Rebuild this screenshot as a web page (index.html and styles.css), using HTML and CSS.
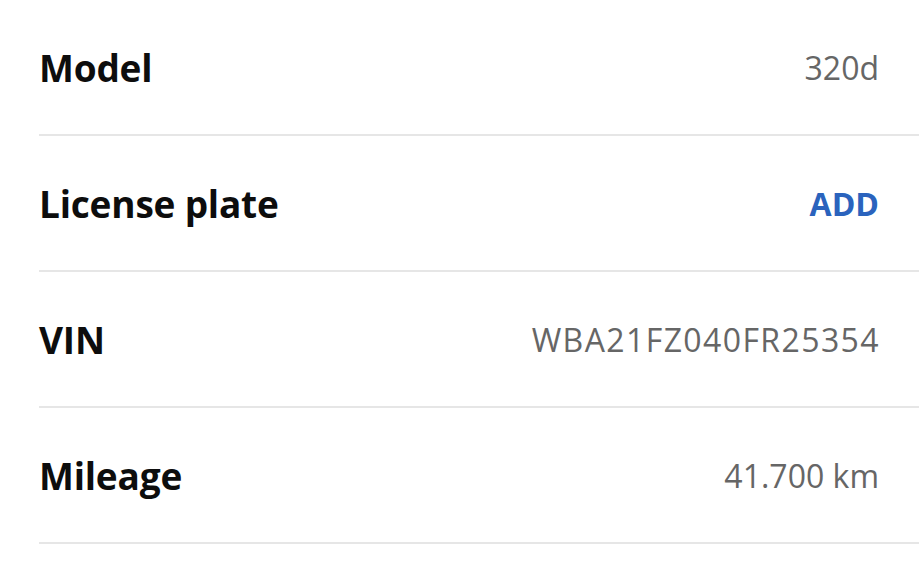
FILE: index.html
```html
<!DOCTYPE html>
<html lang="en">
<head>
    <meta charset="UTF-8">
    <meta name="viewport" content="width=device-width, initial-scale=1.0">
    <title>Vehicle details</title>
    <link rel="stylesheet" href="styles.css">
</head>
<body>

    <div class="details">
        <div class="row">
            <span class="label">Model</span>
            <span class="value">320d</span>
        </div>
        <div class="row">
            <span class="label">License plate</span>
            <a class="action" href="#">ADD</a>
        </div>
        <div class="row">
            <span class="label">VIN</span>
            <span class="value code">WBA21FZ040FR25354</span>
        </div>
        <div class="row">
            <span class="label">Mileage</span>
            <span class="value">41.700 km</span>
        </div>
    </div>

</body>
</html>
```

FILE: styles.css
```css
body {
    font-family: "Open Sans", Arial, sans-serif;
    background-color: #fff;
    margin: 0;
    padding: 0;
}
.details {
    padding-left: 39px;
}
.row {
    display: flex;
    justify-content: space-between;
    align-items: center;
    height: 134px;
    padding-right: 40px;
    border-bottom: 2px solid #e6e6e6;
}
.label {
    font-size: 37px;
    font-weight: 700;
    letter-spacing: -0.2px;
    color: #0d0d0d;
}
.value {
    font-size: 32px;
    color: #666;
}
.value.code {
    letter-spacing: 1.4px;
    margin-right: -1px;
}
.action {
    font-size: 32px;
    font-weight: 700;
    color: #2a63bd;
    text-decoration: none;
}
```
